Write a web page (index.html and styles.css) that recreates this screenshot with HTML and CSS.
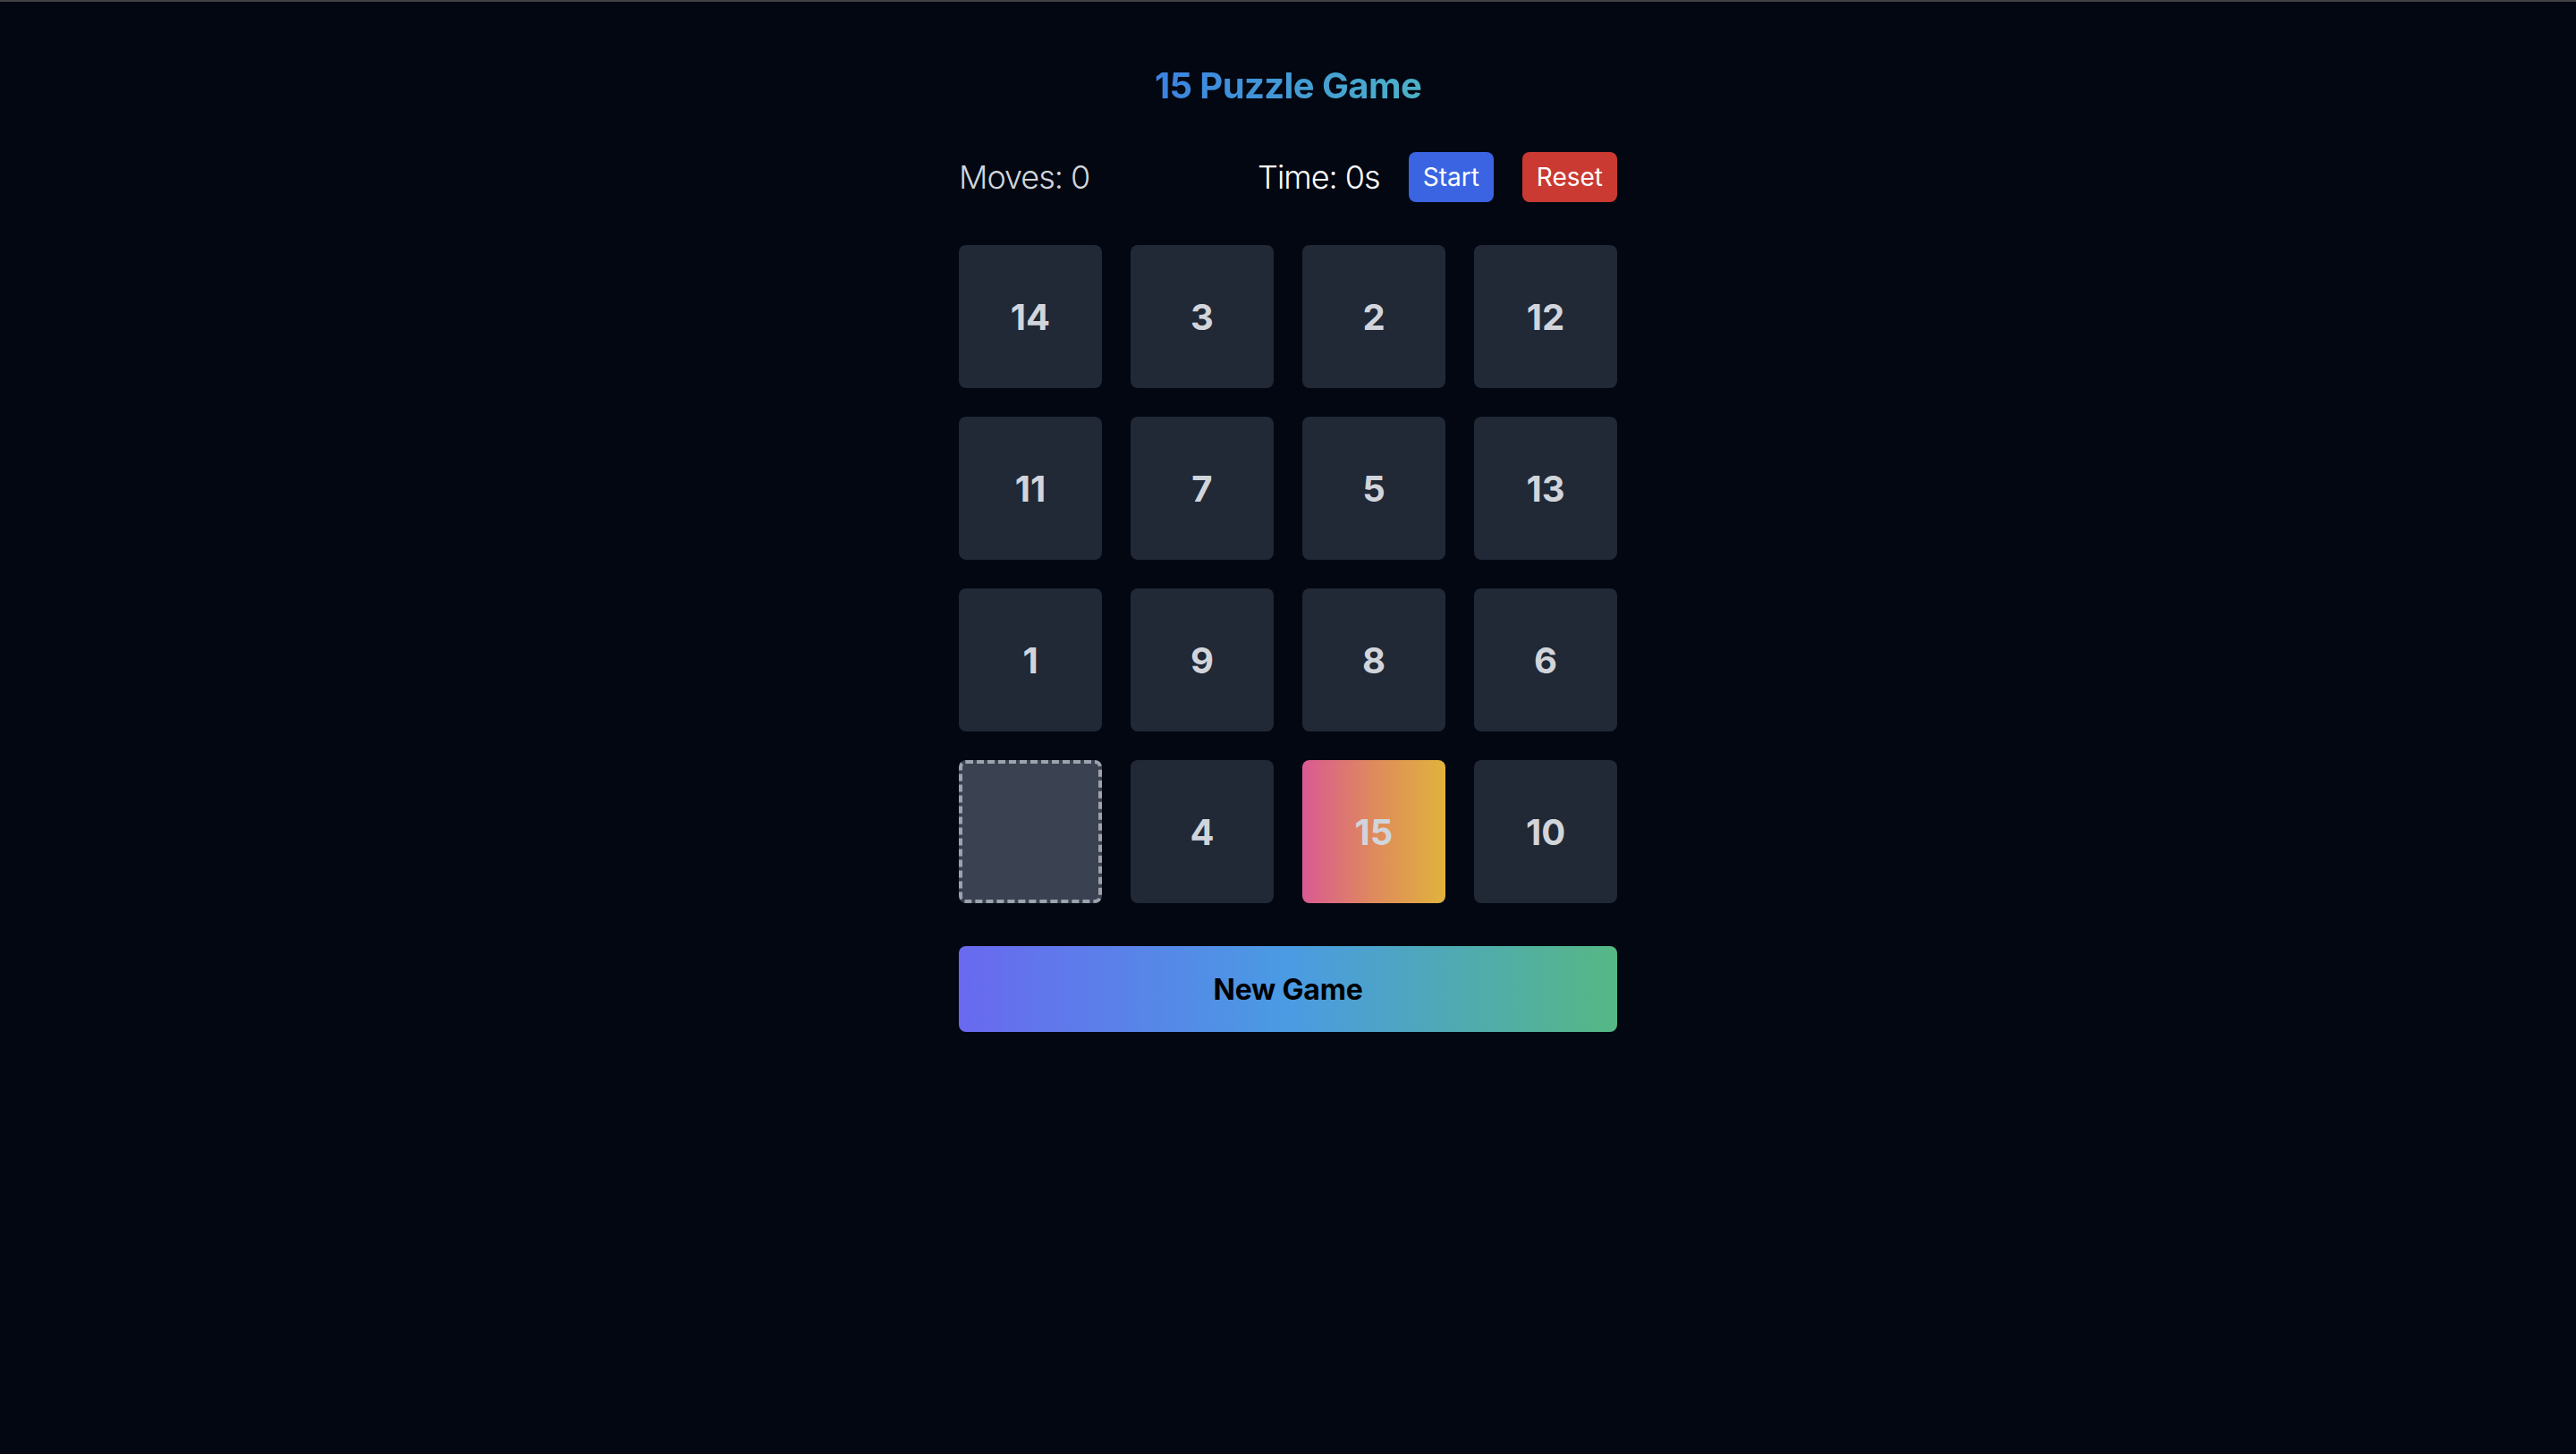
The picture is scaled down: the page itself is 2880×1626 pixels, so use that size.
FILE: index.html
```html
<!DOCTYPE html>
<html lang="en">
<head>
<meta charset="utf-8">
<title>15 Puzzle Game</title>
<link rel="stylesheet" href="styles.css">
</head>
<body>
<div class="topline"></div>
<main class="game">
  <h1 class="title">15 Puzzle Game</h1>
  <div class="status">
    <span class="moves">Moves: 0</span>
    <div class="controls">
      <span class="time">Time: 0s</span>
      <button class="btn btn-start">Start</button>
      <button class="btn btn-reset">Reset</button>
    </div>
  </div>
  <div class="board">
    <div class="tile">14</div>
    <div class="tile">3</div>
    <div class="tile">2</div>
    <div class="tile">12</div>
    <div class="tile">11</div>
    <div class="tile">7</div>
    <div class="tile">5</div>
    <div class="tile">13</div>
    <div class="tile">1</div>
    <div class="tile">9</div>
    <div class="tile">8</div>
    <div class="tile">6</div>
    <div class="tile tile-empty"></div>
    <div class="tile">4</div>
    <div class="tile tile-hot">15</div>
    <div class="tile">10</div>
  </div>
  <button class="new-game">New Game</button>
</main>
</body>
</html>
```

FILE: styles.css
```css
html, body {
  margin: 0;
  padding: 0;
}
body {
  background: #030712;
  min-height: 1626px;
  font-family: Inter, "Noto Sans", "Liberation Sans", sans-serif;
  color: #d1d5db;
}
.topline {
  height: 2px;
  background: #414141;
}
.game {
  width: 736px;
  margin: 0 auto;
  padding-top: 66px;
  display: flex;
  flex-direction: column;
}
.title {
  margin: 0 0 46px;
  font-size: 40px;
  line-height: 56px;
  font-weight: 700;
  letter-spacing: -0.6px;
  text-align: center;
  align-self: center;
  background: linear-gradient(to right, #3b82e2, #4cb2c8);
  -webkit-background-clip: text;
  background-clip: text;
  color: transparent;
}
.status {
  height: 56px;
  display: flex;
  align-items: center;
  justify-content: space-between;
  margin-bottom: 48px;
}
.moves, .time {
  font-size: 36px;
  line-height: 56px;
  font-weight: 300;
  letter-spacing: -1px;
}
.moves {
  color: #d1d5db;
}
.time {
  color: #ffffff;
}
.controls {
  display: flex;
  align-items: center;
  gap: 32px;
}
.btn {
  border: none;
  border-radius: 8px;
  font-family: inherit;
  font-size: 28px;
  line-height: 40px;
  padding: 8px 16px;
  color: #ffffff;
  font-weight: 400;
}
.btn-start {
  background: #3a64e2;
}
.btn-reset {
  background: #ca3a32;
}
.board {
  display: grid;
  grid-template-columns: repeat(4, 160px);
  grid-auto-rows: 160px;
  gap: 32px;
}
.tile {
  background: #212836;
  border-radius: 8px;
  display: flex;
  align-items: center;
  justify-content: center;
  font-size: 40px;
  font-weight: 700;
  color: #d1d5db;
}
.tile-empty {
  background: #3a4150;
  border: 4px dashed #9ca3af;
  box-sizing: border-box;
}
.tile-hot {
  background: linear-gradient(to right, #d95a93, #df8a5c 50%, #e1b33d);
}
.new-game {
  margin-top: 48px;
  height: 96px;
  border: none;
  border-radius: 8px;
  font-family: inherit;
  font-size: 32px;
  font-weight: 700;
  letter-spacing: -0.2px;
  color: #000000;
  background: linear-gradient(to right, #6969ef, #4a9be3 50%, #55b884);
}
```
